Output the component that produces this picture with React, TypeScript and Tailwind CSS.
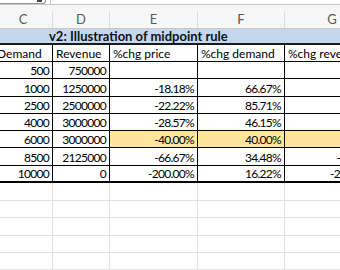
// Spreadsheet fragment: midpoint rule illustration
const colW = ["w-[59px]", "w-[57px]", "w-[88px]", "w-[87px]", "w-[95px]"];
const letters = ["C", "D", "E", "F", "G"];
const headers = ["Demand", "Revenue", "%chg price", "%chg demand", "%chg revenue"];

const rows: string[][] = [
  ["500", "750000", "", "", ""],
  ["1000", "1250000", "-18.18%", "66.67%", "50.00%"],
  ["2500", "2500000", "-22.22%", "85.71%", "66.67%"],
  ["4000", "3000000", "-28.57%", "46.15%", "18.18%"],
  ["6000", "3000000", "-40.00%", "40.00%", "0.00%"],
  ["8500", "2125000", "-66.67%", "34.48%", "-34.15%"],
  ["10000", "0", "-200.00%", "16.22%", "-200.00%"],
];

// heights include the bottom border
const rowH = ["h-[17px]", "h-[18px]", "h-[17px]", "h-[17px]", "h-[17px]", "h-[18px]", "h-[17px]"];
const emptyH = ["h-[18px]", "h-[17px]", "h-[18px]", "h-[17px]", "h-[17px]"];

const App = () => {
  return (
    <div className="w-[340px] h-[270px] overflow-hidden bg-white text-black font-['Lato','Liberation_Sans',sans-serif] text-[12px]">
      {/* Name box / formula bar edge */}
      <div className="flex h-[5px] border-b border-[#c6c6c6] bg-white">
        <div className="relative w-[46px] border-b border-r border-[#9a9a9a] rounded-br-[3px]">
          <div className="absolute left-[37px] top-0 w-[5px] h-[2px] bg-[#444]" />
        </div>
        <div className="ml-[4px] w-px bg-[#c6c6c6]" />
      </div>

      <div className="ml-[-6px] w-[390px]">
        {/* Column letters */}
        <div className="flex h-[24px] pt-[6px] bg-[#f7f7f7] border-b border-[#c8c8c8]">
          {letters.map((l, i) => (
            <div
              key={l}
              className={`${colW[i]} flex items-center justify-center border-r border-[#dcdcdc] text-[#595959] text-[13px]`}
            >
              {l}
            </div>
          ))}
        </div>

        {/* Title row */}
        <div className="flex items-end h-[16px] bg-[#c3d8ef] border-b-2 border-[#1a1a1a]">
          <span className="pl-[55px] font-bold text-[13px] leading-[14px] text-[#111]">
            v2: Illustration of midpoint rule
          </span>
        </div>

        {/* Header row */}
        <div className="flex h-[17px] border-b border-black">
          {headers.map((h, i) => (
            <div
              key={h}
              className={`${colW[i]} flex items-end px-[3px] leading-[15px] whitespace-nowrap overflow-hidden border-r border-black`}
            >
              {h}
            </div>
          ))}
        </div>

        {/* Data rows */}
        {rows.map((r, ri) => (
          <div
            key={ri}
            className={`flex ${rowH[ri]} ${ri === rows.length - 1 ? "border-b-2" : "border-b"} border-black`}
          >
            {r.map((v, ci) => (
              <div
                key={ci}
                className={`${colW[ci]} flex items-end justify-end px-[3px] leading-[15px] tracking-[-0.7px] whitespace-nowrap overflow-hidden border-r border-black ${
                  ri === 4 && ci >= 2 ? "bg-[#ffe699]" : ""
                }`}
              >
                {v}
              </div>
            ))}
          </div>
        ))}

        {/* Empty grid */}
        {emptyH.map((h, ri) => (
          <div key={ri} className={`flex ${h} border-b border-[#e1e1e1]`}>
            {colW.map((w, ci) => (
              <div key={ci} className={`${w} border-r border-[#e1e1e1]`} />
            ))}
          </div>
        ))}
      </div>
    </div>
  );
};

export default App;
